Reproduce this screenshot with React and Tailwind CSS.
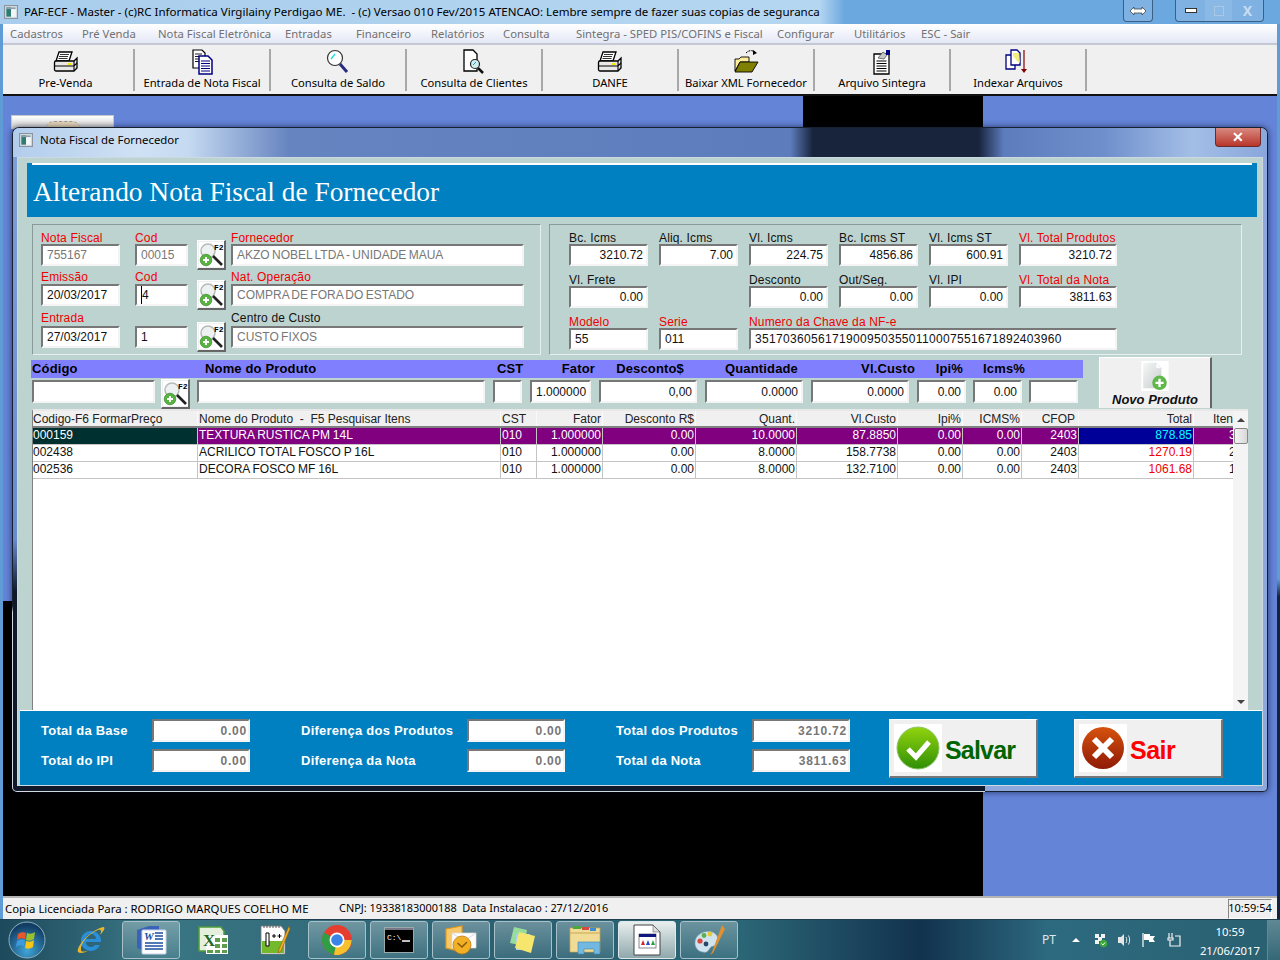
import React from "react";

const UI = "font-['Noto_Sans',sans-serif]";
const ARIAL = "font-['Liberation_Sans',sans-serif]";

// ICONS
const Printer = () => (
  <svg width="26" height="24" viewBox="0 0 26 24">
    <path d="M6 2h13l-3 9H3z" fill="#fff" stroke="#000" strokeWidth="1.300" />
    <path d="M7 4.500h9M6 6.500h9M5.500 8.500h9" stroke="#000" strokeWidth="0.800" />
    <path d="M3 11h18l3-3v10l-3 3H3a1.500 1.500 0 0 1-1.500-1.500v-7A1.500 1.500 0 0 1 3 11z" fill="#e8e8e8" stroke="#000" strokeWidth="1.300" />
    <path d="M2 16h19v5M21 11v5l3-3" fill="none" stroke="#000" strokeWidth="1.100" />
    <rect x="15" y="13" width="3.500" height="2" fill="#f5e500" />
  </svg>
);
const Docs = () => (
  <svg width="24" height="26" viewBox="0 0 24 26">
    <path d="M3 1h9l3 3v15H3z" fill="#fff" stroke="#000" strokeWidth="1.200" />
    <path d="M5 5h7M5 7.500h7M5 10h7M5 12.500h7" stroke="#000" strokeWidth="0.900" />
    <path d="M9 7h9l4 4v14H9z" fill="#fff" stroke="#000080" strokeWidth="1.500" />
    <path d="M11 12h9M11 14.500h9M11 17h9M11 19.500h9M11 22h9" stroke="#000080" strokeWidth="1" />
  </svg>
);
const Magnifier = () => (
  <svg width="24" height="26" viewBox="0 0 24 26">
    <circle cx="9" cy="9" r="7.500" fill="#fff" stroke="#333" strokeWidth="1.200" />
    <path d="M5 10l4-5" stroke="#18d8e0" strokeWidth="1.300" />
    <path d="M14 15l7 8" stroke="#2a2a80" strokeWidth="3" />
  </svg>
);
const DocSearch = () => (
  <svg width="24" height="26" viewBox="0 0 24 26">
    <path d="M2 1h9l4 4v17H2z" fill="#fff" stroke="#000" strokeWidth="1.300" />
    <circle cx="13" cy="15" r="4.500" fill="#cfeef0" stroke="#222" strokeWidth="1.200" />
    <path d="M11 16l3-3" stroke="#18a0c0" strokeWidth="1" />
    <path d="M16 19l5 5" stroke="#111" strokeWidth="2.500" />
  </svg>
);
const FolderOpen = () => (
  <svg width="26" height="26" viewBox="0 0 26 26">
    <path d="M2 10h4l2-2h8v5H7L2 22z" fill="#ffee99" stroke="#000" strokeWidth="0.900" />
    <path d="M2 23l5-10h18l-6 10z" fill="#808000" stroke="#000" strokeWidth="0.900" />
    <path d="M13 4c3-3 6-3 9-1" fill="none" stroke="#000" strokeWidth="1" strokeDasharray="2 1" />
    <path d="M20 1l4 3-4 2z" fill="#000" />
  </svg>
);
const Clipboard = () => (
  <svg width="24" height="26" viewBox="0 0 24 26">
    <path d="M4 5h15v20H4z" fill="#fff" stroke="#000" strokeWidth="1.300" />
    <path d="M6.500 12h10M6.500 14.500h10M6.500 17h10M6.500 19.500h10M6.500 22h10" stroke="#000" strokeWidth="1" />
    <path d="M8 9l5-6 4 3-3 4z" fill="#c8c8c8" stroke="#555" strokeWidth="0.800" />
    <rect x="16" y="1" width="4" height="5" fill="#000080" />
  </svg>
);
const IndexFiles = () => (
  <svg width="26" height="26" viewBox="0 0 26 26">
    <path d="M1 6h9v14H1z" fill="#fff" stroke="#000080" strokeWidth="1.300" />
    <path d="M6 1h6l3 3v12H6z" fill="#fff" stroke="#000080" strokeWidth="1.300" />
    <path d="M8 4h6l1 10-3-2-4-5z" fill="#f5ec80" />
    <path d="M19 1v20" stroke="#800000" strokeWidth="1.200" />
    <path d="M16 20h6l-3 4z" fill="#800000" />
  </svg>
);
const WinLogo = ({ size = 14 }) => (
  <svg width={size} height={size} viewBox="0 0 12 12">
    <rect x="0.500" y="0.500" width="11" height="11" fill="#dfe6ea" stroke="#8a949c" />
    <rect x="2" y="2" width="4" height="8" fill="#2e7d74" />
    <rect x="6" y="2" width="4" height="8" fill="#f2f6f5" />
    <rect x="2" y="2" width="8" height="1.500" fill="#8ea0ad" />
  </svg>
);
const SearchF2 = () => (
  <svg width="25" height="25" viewBox="0 0 25 25">
    <rect width="25" height="25" fill="#fff" />
    <circle cx="9" cy="9" r="7" fill="#eef1f1" stroke="#b5bbbb" strokeWidth="1.500" />
    <path d="M14 14l9 9" stroke="#222" strokeWidth="2.600" />
    <circle cx="7" cy="18" r="5.800" fill="#56b33f" stroke="#3b8a2a" strokeWidth="0.700" />
    <path d="M4 18h6M7 15v6" stroke="#fff" strokeWidth="2" />
    <text x="15" y="8" fontSize="8" fontWeight="700" fontFamily="Liberation Mono, monospace" fill="#000">F2</text>
  </svg>
);
const NewDoc = () => (
  <svg width="30" height="33" viewBox="0 0 30 33">
    <defs>
      <linearGradient id="nd" x1="0" y1="0" x2="1" y2="1">
        <stop offset="0" stopColor="#f6f8f8" />
        <stop offset="1" stopColor="#c8cccc" />
      </linearGradient>
    </defs>
    <rect width="30" height="33" fill="#fff" />
    <path d="M2 2h14l6 6v22H2z" fill="url(#nd)" />
    <path d="M16 2v6h6z" fill="#fff" stroke="#dde" strokeWidth="0.500" />
    <circle cx="20" cy="24" r="8" fill="#5fb84a" />
    <path d="M15.500 24h9M20 19.500v9" stroke="#fff" strokeWidth="2.600" />
  </svg>
);
const SaveIcon = () => (
  <svg width="48" height="48" viewBox="0 0 48 48">
    <defs>
      <linearGradient id="sv" x1="0" y1="0" x2="0" y2="1">
        <stop offset="0" stopColor="#92d40e" />
        <stop offset="1" stopColor="#2f8f06" />
      </linearGradient>
    </defs>
    <rect width="48" height="48" fill="#fff" />
    <circle cx="24" cy="24" r="21" fill="url(#sv)" stroke="#8ec46c" strokeWidth="1" />
    <path d="M14 25l8 8 13-15" fill="none" stroke="#fff" strokeWidth="5" />
  </svg>
);
const ExitIcon = () => (
  <svg width="48" height="48" viewBox="0 0 48 48">
    <defs>
      <linearGradient id="ex" x1="0" y1="0" x2="0" y2="1">
        <stop offset="0" stopColor="#d6520e" />
        <stop offset="1" stopColor="#8f1a06" />
      </linearGradient>
    </defs>
    <rect width="48" height="48" fill="#fff" />
    <circle cx="24" cy="24" r="21" fill="url(#ex)" />
    <path d="M15 15l18 18M33 15L15 33" stroke="#fff" strokeWidth="6" />
  </svg>
);

// TASKBAR ICONS
const Orb = () => (
  <svg width="38" height="38" viewBox="0 0 38 38">
    <defs>
      <radialGradient id="orb" cx="0.500" cy="0.800" r="0.700">
        <stop offset="0" stopColor="#3fa6d8" />
        <stop offset="1" stopColor="#123e66" />
      </radialGradient>
    </defs>
    <circle cx="19" cy="19" r="18" fill="url(#orb)" stroke="#8fb0bc" strokeWidth="1" />
    <path d="M10 13c3-2 5-2 8-1l-1 6c-3-1-5-1-8 1z" fill="#e8562c" />
    <path d="M19 12c3 1 5 1 8-1l-1 7c-3 2-5 2-8 1z" fill="#9ac02c" />
    <path d="M9 20c3-2 5-2 8-1l-1 6c-3-1-5-1-8 1z" fill="#3c9be0" />
    <path d="M18 20c3 1 5 1 8-1l-1 7c-3 2-5 2-8 1z" fill="#f5c518" />
  </svg>
);
const Ie = () => (
  <svg width="32" height="32" viewBox="0 0 32 32">
    <path d="M16 7a10 10 0 1 0 9 14h-5a5 5 0 0 1-9-3h15a10 10 0 0 0-10-11zm-5 8a5 5 0 0 1 10 0z" fill="#2a8fd8" />
    <path d="M3 28C1 24 12 8 28 3c4 0-1 6-3 8 2-4 1-6-2-5C13 10 5 20 6 26c0 2 4 2 8 0-4 3-9 4-11 2z" fill="#e8b52c" />
  </svg>
);
const Word = () => (
  <svg width="32" height="32" viewBox="0 0 32 32">
    <path d="M2 6l12-4h10v26H12L2 24z" fill="#3a62b8" />
    <rect x="7" y="6" width="24" height="24" rx="1" fill="#fff" stroke="#c8d4e8" />
    <text x="9" y="16" fontSize="11" fontWeight="700" fontStyle="italic" fontFamily="Liberation Serif, serif" fill="#1c4ea0">W</text>
    <path d="M20 9h8M20 12h8M20 15h8M10 19h18M10 22h18M10 25h18" stroke="#1c4ea0" strokeWidth="1.500" />
  </svg>
);
const Excel = () => (
  <svg width="32" height="32" viewBox="0 0 32 32">
    <path d="M2 3h22l3 4v20H2z" fill="#e4f0dc" stroke="#4f9a3c" strokeWidth="1.500" />
    <rect x="9" y="11" width="22" height="19" fill="#fff" />
    <path d="M18 14h5v4h-5zm7 0h5v4h-5zm-7 6h5v4h-5zm7 0h5v4h-5zm-7 6h5v3h-5zm7 0h5v3h-5zM10 26h6v3h-6z" fill="#5f9c4c" />
    <text x="6" y="22" fontSize="17" fontWeight="700" fontFamily="Liberation Serif, serif" fill="#1f6a1f">X</text>
  </svg>
);
const Npp = () => (
  <svg width="32" height="32" viewBox="0 0 32 32">
    <path d="M2 2h20l4 5v23H2z" fill="#fff" stroke="#777" strokeWidth="0.800" />
    <path d="M3 17h22v12H3z" fill="#74b92c" />
    <path d="M5 2v2M8 2v2M11 2v2M14 2v2M17 2v2M20 2v2" stroke="#555" />
    <path d="M7 9h3v13H7z" fill="#fff" stroke="#000" strokeWidth="1" />
    <path d="M13 12h4M15 10v4M18.500 12h4M20.500 10v4" stroke="#000" strokeWidth="1" />
    <path d="M30 2l-10 23-1 4 3-2L31 5z" fill="#f0b020" stroke="#8a5a10" strokeWidth="0.600" />
  </svg>
);
const Chrome = () => (
  <svg width="32" height="32" viewBox="0 0 32 32">
    <circle cx="16" cy="16" r="15" fill="#e53e30" />
    <path d="M16 16L3 8.500A15 15 0 0 0 13 30.700z" fill="#2f9e44" />
    <path d="M16 16h14.600A15 15 0 0 1 13 30.700z" fill="#f6c12d" />
    <circle cx="16" cy="16" r="7.500" fill="#fff" />
    <circle cx="16" cy="16" r="5.800" fill="#3a84e8" />
  </svg>
);
const Cmd = () => (
  <svg width="30" height="26" viewBox="0 0 30 26">
    <rect x="0.500" y="0.500" width="29" height="25" fill="#000" stroke="#9aa" />
    <rect x="1" y="1" width="28" height="2" fill="#778" />
    <text x="3" y="13" fontSize="8" fontFamily="Liberation Mono, monospace" fill="#fff">C:\</text>
    <path d="M18 14h8" stroke="#fff" strokeWidth="1.500" />
  </svg>
);
const Outlook = () => (
  <svg width="32" height="32" viewBox="0 0 32 32">
    <path d="M1 5l16-3v26L1 24z" fill="#f7c86a" stroke="#e09a20" strokeWidth="1.200" />
    <path d="M7 9h24v15H7z" fill="#fdfdfd" stroke="#ddd" strokeWidth="0.700" />
    <path d="M7 9l12 8 12-8" fill="none" stroke="#d8d8d8" />
    <circle cx="17" cy="21" r="9" fill="#f2b024" stroke="#c07c10" strokeWidth="0.800" />
    <path d="M12.500 19l4.500 4 5-5" fill="none" stroke="#8a5a08" strokeWidth="1.600" />
  </svg>
);
const Sticky = () => (
  <svg width="32" height="32" viewBox="0 0 32 32">
    <path d="M7 3l13 3-3 16-14-3z" fill="#98dc9c" />
    <path d="M9 10h14v16H9z" fill="#a8d0f0" />
    <path d="M12 8l16 4-4 17-16-5z" fill="#f6e66e" />
  </svg>
);
const Explorer = () => (
  <svg width="32" height="32" viewBox="0 0 32 32">
    <path d="M1 4h30v24H1z" fill="#f0dc96" stroke="#c8a850" strokeWidth="0.700" />
    <path d="M4 2h8v3H4z" fill="#4aa83c" />
    <path d="M13 3h7v3h-7z" fill="#d84a3c" />
    <path d="M21 4h6v3h-6z" fill="#3c8cd8" />
    <path d="M1 9h30" stroke="#c8a850" />
    <path d="M9 18h22v12h-6v-5H15v5H9z" fill="#72b8e0" stroke="#3c86b0" strokeWidth="0.600" />
  </svg>
);
const AppDoc = () => (
  <svg width="28" height="32" viewBox="0 0 28 32">
    <path d="M1 1h19l7 7v23H1z" fill="#fff" stroke="#444" strokeWidth="1" />
    <path d="M20 1v7h7z" fill="#ddd" stroke="#444" strokeWidth="0.500" />
    <rect x="6" y="10" width="17" height="14" fill="#fff" stroke="#556" strokeWidth="0.700" />
    <rect x="6" y="10" width="17" height="3" fill="#101880" />
    <path d="M8 21l2-5 2 5z" fill="#c82828" />
    <path d="M13 21l2-5 2 5z" fill="#2848c8" />
    <path d="M18 21l2-5 2 5z" fill="#28a048" />
  </svg>
);
const Palette = () => (
  <svg width="34" height="34" viewBox="0 0 34 34">
    <path d="M3 20c0-9 10-13 17-11 6 2 7 8 5 12-2 3-5 1-7 4-2 3-3 5-7 4-4 0-8-4-8-9z" fill="#cfe4ee" stroke="#8cb0c4" strokeWidth="0.600" />
    <circle cx="8" cy="18" r="2.600" fill="#d8483c" />
    <circle cx="12" cy="12.500" r="2.400" fill="#5cb04c" />
    <circle cx="18" cy="11" r="2.400" fill="#e8c830" />
    <circle cx="14" cy="21" r="2.400" fill="#284868" />
    <path d="M30 2l-10 27-2 3 3-2L33 6z" fill="#e09030" />
  </svg>
);

// SHARED BITS
const Sunken = ({ className = "", children, align = "left", pr = "pr-[3px]" }) => (
  <div
    className={`flex items-center overflow-hidden border-2 border-t-[#777] border-l-[#777] border-r-[#f4f4f4] border-b-[#f4f4f4] bg-white pl-1 text-[12px] whitespace-nowrap [word-spacing:-1px] ${pr} ${
      align === "right" ? "justify-end" : "justify-start"
    } ${ARIAL} ${className}`}
  >
    {children}
  </div>
);

const Field = ({ label, red, value, w, align, gray, yellow, spaced, lift = "" }) => (
  <div className={`flex flex-col ${w}`}>
    <div className={`h-[13px] text-[12px] leading-[15px] tracking-[0.15px] whitespace-nowrap ${ARIAL} ${lift} ${red ? "text-[#f00000]" : "text-[#111]"}`}>
      {label}
    </div>
    <Sunken
      align={align}
      className={`h-[22px] ${gray ? "text-[#777]" : "text-[#111]"} ${yellow ? "bg-[#ffffc8]" : ""} ${spaced ? "tracking-[0.32px]" : ""}`}
    >
      {value}
    </Sunken>
  </div>
);

const SearchBtn = ({ className = "" }) => (
  <div className={`flex h-[30px] w-[29px] shrink-0 items-center justify-center border border-b-2 border-r-2 border-t-white border-l-white border-b-[#666] border-r-[#666] bg-[#f0f0f0] ${className}`}>
    <SearchF2 />
  </div>
);

const SupplierRow = ({ label, red, cod, codLabel, codYellow, codGray, value, first, third, nameRed, nameLabel, gap, lift }) => (
  <div className={`flex h-[35px] ${gap}`}>
    <Field label={label} red={red} value={first} gray={third} w="w-[79px]" lift={lift} />
    <div className="ml-[15px]">
      <Field label={codLabel} red value={cod} gray={codGray} yellow={codYellow} w="w-[53px]" lift={lift} />
    </div>
    <SearchBtn className="mt-[9px] ml-[9px]" />
    <div className="ml-[5px]">
      <Field label={nameLabel} red={nameRed} value={value} gray w="w-[293px]" lift={lift} />
    </div>
  </div>
);

// TOOLBAR
const tools = [
  { name: "Pre-Venda", icon: <Printer />, w: "w-[132px] pr-[5px]" },
  { name: "Entrada de Nota Fiscal", icon: <Docs />, w: "w-[136px]" },
  { name: "Consulta de Saldo", icon: <Magnifier />, w: "w-[136px]" },
  { name: "Consulta de Clientes", icon: <DocSearch />, w: "w-[136px]" },
  { name: "DANFE", icon: <Printer />, w: "w-[136px]" },
  { name: "Baixar XML Fornecedor", icon: <FolderOpen />, w: "w-[136px]" },
  { name: "Arquivo Sintegra", icon: <Clipboard />, w: "w-[136px]" },
  { name: "Indexar Arquivos", icon: <IndexFiles />, w: "w-[136px]" },
];

const menus = [
  ["Cadastros", "w-[72px]"],
  ["Pré Venda", "w-[76px]"],
  ["Nota Fiscal Eletrônica", "w-[127px]"],
  ["Entradas", "w-[71px]"],
  ["Financeiro", "w-[75px]"],
  ["Relatórios", "w-[72px]"],
  ["Consulta", "w-[73px]"],
  ["Sintegra - SPED PIS/COFINS e Fiscal", "w-[201px]"],
  ["Configurar", "w-[77px]"],
  ["Utilitários", "w-[67px]"],
  ["ESC - Sair", "w-[60px]"],
];

// TABLE
const cols = "grid grid-cols-[165px_303px_36px_66px_93px_101px_101px_65px_59px_57px_115px_40px]";
const head = ["Codigo-F6 FormarPreço", "Nome do Produto  -  F5 Pesquisar Itens", "CST", "Fator", "Desconto R$", "Quant.", "Vl.Custo", "Ipi%", "ICMS%", "CFOP", "Total", "Itens"];
const rows = [
  ["000159", "TEXTURA RUSTICA PM 14L", "010", "1.000000", "0.00", "10.0000", "87.8850", "0.00", "0.00", "2403", "878.85", "3"],
  ["002438", "ACRILICO TOTAL FOSCO P 16L", "010", "1.000000", "0.00", "8.0000", "158.7738", "0.00", "0.00", "2403", "1270.19", "2"],
  ["002536", "DECORA FOSCO MF 16L", "010", "1.000000", "0.00", "8.0000", "132.7100", "0.00", "0.00", "2403", "1061.68", "1"],
];

const cellClass = (i) => {
  if (i === 0) return "text-left";
  if (i < 3) return "text-left pl-px [word-spacing:-0.5px]";
  if (i === 11) return "text-left pl-[35px]";
  return "text-right pr-[1px]";
};

const Row = ({ cells, selected }) => (
  <div className={`${cols} h-[17px] border-b border-[#c4c4c4] text-[12px] leading-[14px] ${ARIAL}`}>
    {cells.map((c, i) => {
      let tone = "bg-white text-[#111]";
      if (i === 10 && !selected) tone = "bg-white text-[#f00000]";
      if (selected) tone = "bg-[#800080] text-white";
      if (selected && i === 0) tone = "bg-[#003030] text-white";
      if (selected && i === 10) tone = "bg-[#000099] text-[#00ffff]";
      return (
        <div key={i} className={`overflow-hidden whitespace-nowrap border-r border-[#c4c4c4] ${cellClass(i)} ${tone}`}>
          {c}
        </div>
      );
    })}
  </div>
);

const Total = ({ label, value, lw, first }) => (
  <div className={`flex items-center ${first ? "" : "mt-[7px]"}`}>
    <div className={`text-[13px] font-bold tracking-[0.25px] whitespace-nowrap text-white ${ARIAL} ${lw}`}>{label}</div>
    <Sunken align="right" pr="pr-[1px]" className="h-[23px] w-[98px] text-[12.500px] font-bold tracking-[0.8px] text-[#777]">{value}</Sunken>
  </div>
);

const ActionBtn = ({ icon, label, color, className, track }) => (
  <div className={`flex h-[59px] w-[149px] items-center border border-b-2 border-r-2 border-t-white border-l-white border-b-[#777] border-r-[#777] bg-[#f0f0f0] pl-[4px] ${className}`}>
    {icon}
    <span className={`ml-[3px] translate-y-[3px] text-[25px] font-bold ${ARIAL} ${track} ${color}`}>{label}</span>
  </div>
);

const productInputs = [
  ["w-[123px]", ""],
  null,
  ["w-[288px]", ""],
  ["w-[29px] ml-[8px]", ""],
  ["w-[61px] ml-[8px]", "1.000000"],
  ["w-[98px] ml-[8px]", "0,00"],
  ["w-[98px] ml-[8px]", "0.0000"],
  ["w-[98px] ml-[8px]", "0.0000"],
  ["w-[49px] ml-[8px]", "0.00"],
  ["w-[49px] ml-[7px]", "0.00"],
  ["w-[49px] ml-[7px]", ""],
];

const productHead = [
  ["Código", "w-[173px] text-left"],
  ["Nome do Produto", "w-[292px] text-left"],
  ["CST", "w-[42px] text-left"],
  ["Fator", "w-[56px] text-right"],
  ["Desconto$", "w-[89px] text-right"],
  ["Quantidade", "w-[114px] text-right"],
  ["Vl.Custo", "w-[117px] text-right"],
  ["Ipi%", "w-[48px] text-right"],
  ["Icms%", "w-[62px] text-right"],
];

const taskButtons = [
  { icon: <Word />, box: true, w: "w-[58px] ml-[6px]" },
  { icon: <Excel />, w: "w-[58px] ml-[4px]" },
  { icon: <Npp />, w: "w-[58px] ml-[4px]" },
  { icon: <Chrome />, box: true, w: "w-[58px] ml-[4px]" },
  { icon: <Cmd />, box: true, w: "w-[58px] ml-[4px]" },
  { icon: <Outlook />, box: true, w: "w-[58px] ml-[4px]" },
  { icon: <Sticky />, box: true, w: "w-[58px] ml-[4px]" },
  { icon: <Explorer />, box: true, w: "w-[58px] ml-[4px]" },
  { icon: <AppDoc />, active: true, w: "w-[58px] ml-[4px]" },
  { icon: <Palette />, box: true, w: "w-[58px] ml-[4px]" },
];

export default function App() {
  return (
    <div className={`flex h-[960px] w-[1280px] flex-col overflow-hidden bg-[#5f9bd5] ${UI}`}>
      {/* TITLE BAR */}
      <div className="flex h-6 shrink-0 items-center bg-[linear-gradient(90deg,#a9cdec_0,#b4d6f1_60%,#b4d6f1_64%,#6ba8df_66%,#6ba8df_100%)] pl-[4px]">
        <WinLogo />
        <span className="ml-[6px] text-[11.550px] whitespace-pre text-black">
          PAF-ECF - Master - (c)RC Informatica Virgilainy Perdigao ME.  - (c) Versao 010 Fev/2015 ATENCAO: Lembre sempre de fazer suas copias de seguranca
        </span>
        <div className="mr-[16px] ml-auto flex items-start self-start">
          <div className="flex h-[22px] w-[30px] items-center justify-center rounded-b-[4px] border border-t-0 border-[#3d5f86] bg-[#7fb2e2]">
            <svg width="18" height="10" viewBox="0 0 18 10">
              <path d="M1 5l4-4v2h8V1l4 4-4 4V7H5v2z" fill="#fff" stroke="#333" strokeWidth="0.700" />
            </svg>
          </div>
          <div className="ml-[22px] flex h-[22px] w-[30px] items-center justify-center rounded-bl-[4px] border border-t-0 border-r-0 border-[#3d5f86] bg-[#7fb2e2]">
            <div className="h-[5px] w-[12px] border border-[#333] bg-white" />
          </div>
          <div className="flex h-[22px] w-[27px] items-center justify-center border-b border-[#3d5f86] bg-[#8ab9e6]">
            <div className="h-[10px] w-[10px] border border-[#a8c8e6]" />
          </div>
          <div className="flex h-[22px] w-[32px] items-center justify-center rounded-br-[4px] border border-t-0 border-l-0 border-[#3d5f86] bg-[#7fb2e2] text-[14px] font-bold text-[#c8dcf0]">X</div>
        </div>
      </div>

      <div className="flex min-h-0 flex-1 flex-col border-x-[3px] border-transparent bg-[linear-gradient(90deg,transparent_50%,#5f9bd5_50%),linear-gradient(180deg,#5f9bd5_0,#5f9bd5_62%,#14233f_64%,#14233f_100%)]">
        {/* MENU */}
        <div className="flex h-[21px] shrink-0 items-center border-b-2 border-[#c4c8d4] bg-[linear-gradient(180deg,#ffffff,#e4e8f6)] pt-[1px] pl-[7px] text-[11.300px] text-[#717171]">
          {menus.map(([m, w]) => (
            <span key={m} className={`whitespace-nowrap ${w}`}>{m}</span>
          ))}
        </div>

        {/* TOOLBAR */}
        <div className="flex h-[51px] shrink-0 items-center border-b-2 border-[#111] bg-[#f0f0f0]">
          {tools.map((t) => (
            <div key={t.name} className={`flex h-[42px] flex-col items-center border-r-2 border-[#a8a8a8] ${t.w}`}>
              <div className="flex h-[26px] items-center">{t.icon}</div>
              <span className="text-[11.200px] leading-[15px] whitespace-nowrap text-black">{t.name}</span>
            </div>
          ))}
        </div>

        {/* DESKTOP */}
        <div className="relative min-h-0 flex-1 bg-[#6484d8]">
          <div className="absolute top-0 left-[800px] h-[32px] w-[180px] bg-black" />
          <div className="absolute bottom-0 left-0 h-[295px] w-[980px] bg-black" />
          <div className="absolute top-[19px] left-[8px] flex h-[14px] w-[103px] justify-center border border-[#c8c8c8] bg-[linear-gradient(180deg,#ffffff,#cfcfcf)] pt-[5px]">
            <div className="h-[9px] w-[36px] rounded-t-full border-t border-dashed border-[#999] bg-[#e6d6b8]" />
          </div>

          {/* CHILD WINDOW */}
          <div className="absolute top-[31px] left-[9px] h-[665px] w-[1256px] rounded-t-[7px] rounded-b-[5px] bg-[linear-gradient(90deg,transparent_77.500%,#16202e_77.500%),linear-gradient(180deg,#16202e_0,#16202e_72%,#d0d8e0_73%,#d0d8e0_100%)] p-px shadow-[0_0_6px_rgba(0,0,30,0.6)]">
            <div className="flex h-full flex-col rounded-t-[6px] rounded-b-[4px] bg-[linear-gradient(90deg,transparent_77.500%,#8ca8dc_77.500%),linear-gradient(180deg,#7f9fd8_0,#6a8ad0_62%,#10182a_70%,#10182a_100%)] px-[4px] pb-[5px]">
              <div className="-mx-[4px] flex h-[29px] shrink-0 items-center rounded-t-[6px] bg-[linear-gradient(90deg,#b2cdec_0,#cfe1f4_10%,#c5d9f1_14%,#6684c0_22%,#5c7cbc_62%,#18233c_63.800%,#18233c_77%,#5c7cbc_79%,#6f8fcc_87%,#a3bee6_94%,#8aa7dc_100%)] pb-[5px] pl-[6px]">
                <WinLogo />
                <span className="ml-[7px] text-[11.400px] text-black">Nota Fiscal de Fornecedor</span>
                <div className="mr-[6px] ml-auto flex h-[19px] w-[46px] -translate-y-[3px] items-center justify-center rounded-b-[4px] border border-t-0 border-[#6a2a2a] bg-[linear-gradient(180deg,#d88a80,#b8352a)] text-[14px] leading-none font-bold text-white">✕</div>
              </div>

              <div className="flex min-h-0 flex-1 flex-col border border-[#cdd9e2] bg-[#bdd3d0]">
                {/* HEADER */}
                <div className="mt-[5px] ml-[9px] h-[54px] w-[1230px] shrink-0 bg-[#0080c0]">
                  <div className="mx-[5px] h-[2px] bg-white" />
                  <div className="pt-[10px] pl-[6px] font-['Liberation_Serif',serif] text-[27.400px] leading-[34px] text-white">
                    Alterando Nota Fiscal de Fornecedor
                  </div>
                </div>

                {/* PANELS */}
                <div className="mt-[7px] ml-[14px] flex shrink-0 gap-[8px]">
                  <div className="flex h-[131px] w-[509px] flex-col border border-t-[#8a9a98] border-l-[#8a9a98] border-r-[#e8f0ee] border-b-[#e8f0ee] pt-[6px] pl-[8px]">
                    <SupplierRow label="Nota Fiscal" red first="755167" third codLabel="Cod" cod="00015" codGray nameLabel="Fornecedor" nameRed value="AKZO NOBEL LTDA - UNIDADE MAUA" />
                    <SupplierRow label="Emissão" red first="20/03/2017" codLabel="Cod" cod={<span className="border-l border-black">4</span>} codYellow nameLabel="Nat. Operação" nameRed value="COMPRA DE FORA DO ESTADO" gap="mt-[5px]" lift="-mt-px mb-px" />
                    <SupplierRow label="Entrada" red first="27/03/2017" codLabel=" " cod="1" nameLabel="Centro de Custo" value="CUSTO FIXOS" gap="mt-[7px]" lift="-mt-[2px] mb-[2px]" />
                  </div>

                  <div className="flex h-[131px] w-[693px] flex-col gap-[7px] border border-t-[#8a9a98] border-l-[#8a9a98] border-r-[#e8f0ee] border-b-[#e8f0ee] pt-[6px] pl-[19px]">
                    <div className="flex gap-[11px]">
                      <Field label="Bc. Icms" value="3210.72" align="right" w="w-[79px]" />
                      <Field label="Aliq. Icms" value="7.00" align="right" w="w-[79px]" />
                      <Field label="Vl. Icms" value="224.75" align="right" w="w-[79px]" />
                      <Field label="Bc. Icms ST" value="4856.86" align="right" w="w-[79px]" />
                      <Field label="Vl. Icms ST" value="600.91" align="right" w="w-[79px]" />
                      <Field label="Vl. Total Produtos" red value="3210.72" align="right" w="w-[98px]" />
                    </div>
                    <div className="flex gap-[11px]">
                      <Field label="Vl. Frete" value="0.00" align="right" w="w-[79px]" />
                      <div className="w-[79px]" />
                      <Field label="Desconto" value="0.00" align="right" w="w-[79px]" />
                      <Field label="Out/Seg." value="0.00" align="right" w="w-[79px]" />
                      <Field label="Vl. IPI" value="0.00" align="right" w="w-[79px]" />
                      <Field label="Vl. Total da Nota" red value="3811.63" align="right" w="w-[98px]" />
                    </div>
                    <div className="flex gap-[11px]">
                      <Field label="Modelo" red value="55" w="w-[79px]" />
                      <Field label="Serie" red value="011" w="w-[79px]" />
                      <Field label="Numero da Chave da NF-e" red spaced value="35170360561719009503550110007551671892403960" w="w-[368px]" />
                    </div>
                  </div>
                </div>

                {/* PRODUCT ENTRY */}
                <div className="mt-[2px] ml-[13px] flex h-[51px] shrink-0">
                  <div className="w-[1052px] pt-[3px]">
                    <div className={`flex h-[18px] items-center bg-[#8080ff] pl-px text-[13px] font-bold tracking-[0.15px] text-black ${ARIAL}`}>
                      {productHead.map(([h, cls]) => (
                        <span key={h} className={`whitespace-nowrap ${cls}`}>{h}</span>
                      ))}
                    </div>
                    <div className="mt-[1px] ml-px flex items-start">
                      {productInputs.map((p, i) =>
                        p ? (
                          <Sunken key={i} align={i > 4 ? "right" : "left"} className={`mt-[1px] h-[23px] text-[#111] ${p[0]}`}>{p[1]}</Sunken>
                        ) : (
                          <div key={i} className="mr-[7px] ml-[6px]"><SearchBtn /></div>
                        )
                      )}
                    </div>
                  </div>
                  <div className="ml-[16px] flex h-[51px] w-[113px] flex-col items-center border-t border-l border-r-2 border-t-white border-l-white border-r-[#666] bg-[#f0f0f0] pt-[3px]">
                    <NewDoc />
                    <span className={`mt-[1px] text-[13px] leading-[16px] font-bold italic text-[#111] ${ARIAL}`}>Novo Produto</span>
                  </div>
                </div>

                {/* TABLE */}
                <div className="mt-[1px] ml-[14px] flex h-[301px] w-[1216px] shrink-0 border-t-2 border-l border-t-[#e8e8e8] border-l-[#808080] bg-white">
                  <div className="min-w-0 flex-1">
                    <div className={`${cols} h-[17px] border-b-2 border-[#808080] bg-[#f0f0f0] text-[12px] leading-[17px] text-[#222] ${ARIAL}`}>
                      {head.map((h, i) => (
                        <div key={h} className={`overflow-hidden border-r border-[#fafafa] whitespace-pre ${i === 0 ? "text-left" : i < 3 ? "pl-px text-left" : i === 11 ? "pl-[19px] text-left" : i === 9 ? "pr-[3px] text-right" : "pr-[1px] text-right"}`}>
                          {h}
                        </div>
                      ))}
                    </div>
                    {rows.map((r, i) => (
                      <Row key={r[0]} cells={r} selected={i === 0} />
                    ))}
                  </div>
                  <div className="flex w-[15px] shrink-0 flex-col items-center justify-between bg-[#f4f4f4] text-[#444]">
                    <div className="flex w-full flex-col items-center">
                      <div className="flex h-[17px] items-center"><div className="h-0 w-0 border-x-[4px] border-b-[4px] border-x-transparent border-b-[#444]" /></div>
                      <div className="h-[16px] w-[14px] rounded-[2px] border border-[#888] bg-[linear-gradient(90deg,#f4f4f4,#d8d8d8)]" />
                    </div>
                    <div className="flex h-[17px] items-center"><div className="h-0 w-0 border-x-[4px] border-t-[4px] border-x-transparent border-t-[#444]" /></div>
                  </div>
                </div>

                {/* TOTALS */}
                <div className="ml-[2px] flex min-h-0 flex-1 items-start border-t border-white bg-[#0080c0] pt-[8px] pl-[21px]">
                  <div>
                    <Total first label="Total da Base" value="0.00" lw="w-[111px]" />
                    <Total label="Total do IPI" value="0.00" lw="w-[111px]" />
                  </div>
                  <div className="ml-[51px]">
                    <Total first label="Diferença dos Produtos" value="0.00" lw="w-[166px]" />
                    <Total label="Diferença da Nota" value="0.00" lw="w-[166px]" />
                  </div>
                  <div className="ml-[51px]">
                    <Total first label="Total dos Produtos" value="3210.72" lw="w-[136px]" />
                    <Total label="Total da Nota" value="3811.63" lw="w-[136px]" />
                  </div>
                  <ActionBtn className="ml-[39px]" icon={<SaveIcon />} label="Salvar" track="tracking-[-0.8px]" color="text-[#006400]" />
                  <ActionBtn className="ml-[36px]" icon={<ExitIcon />} label="Sair" track="tracking-[-0.5px]" color="text-[#ff0000]" />
                </div>
              </div>
            </div>
          </div>
        </div>

        {/* STATUS BAR */}
        <div className="flex h-[23px] shrink-0 items-center border-t-2 border-[#b4b4b4] bg-[#f0f0f0] pl-[2px] text-[11.400px] whitespace-pre text-black">
          <span className="w-[334px]">Copia Licenciada Para : RODRIGO MARQUES COELHO ME</span>
          <span className="text-[10.900px]">CNPJ: 19338183000188  Data Instalacao : 27/12/2016</span>
          <div className="mr-[5px] ml-auto flex h-[20px] w-[44px] items-center justify-center border border-t-[#888] border-l-[#888] border-r-white border-b-white text-[11px]">10:59:54</div>
        </div>
      </div>

      {/* TASKBAR */}
      <div className="flex h-[41px] shrink-0 items-center border-t border-[#1f3f50] bg-[linear-gradient(90deg,#1d4a5c_0,#3a7684_12%,#2a5f70_40%,#2b6676_58%,#12324e_72%,#2d6a80_82%,#2a6070_100%)] pl-[5px] text-white">
        <div className="flex w-[44px] justify-center"><Orb /></div>
        <div className="ml-[16px] flex w-[51px] justify-center"><Ie /></div>
        {taskButtons.map((b, i) => (
          <div
            key={i}
            className={`flex h-[38px] items-center justify-center rounded-[3px] ${b.w} ${
              b.active
                ? "border border-[#dfe8ea] bg-[linear-gradient(180deg,#e8eeee,#90a8ac)]"
                : b.box
                ? "border border-[#a8c0c8] bg-[linear-gradient(180deg,rgba(255,255,255,0.3),rgba(255,255,255,0.08))]"
                : ""
            }`}
          >
            {b.icon}
          </div>
        ))}
        <span className="ml-[304px] text-[12px] text-[#dde8ee]">PT</span>
        <div className="ml-[16px] h-0 w-0 border-x-[4px] border-b-[4px] border-x-transparent border-b-white" />
        <svg className="ml-[12px]" width="16" height="16" viewBox="0 0 16 16">
          <path d="M3 2h4v4H3zm6 0h4v4H9zM3 8h4v4H3zm3-3h4v4H6z" fill="#f2f2f2" />
          <circle cx="11.500" cy="11.500" r="3.800" fill="#3aa83a" />
          <path d="M9.500 11.500l1.500 1.500 2-2.500" stroke="#fff" fill="none" />
        </svg>
        <svg className="ml-[9px]" width="15" height="16" viewBox="0 0 15 16">
          <path d="M1 5h3l3-3v12l-3-3H1z" fill="#e6e6e6" />
          <path d="M9 5c1 2 1 4 0 6M11.500 3.500c1.500 3 1.500 6 0 9" stroke="#e6e6e6" fill="none" />
        </svg>
        <svg className="ml-[9px]" width="15" height="16" viewBox="0 0 15 16">
          <path d="M2 1v14" stroke="#fff" strokeWidth="1.200" />
          <path d="M3 2h6v2h5l-2 3 2 3H8V8H3z" fill="#fff" />
        </svg>
        <svg className="ml-[10px]" width="15" height="16" viewBox="0 0 15 16">
          <path d="M3 1v5h3V1M2 6h5v2H2zM4 8v6h10V4H9" fill="none" stroke="#f2f2f2" strokeWidth="1.200" />
        </svg>
        <div className="ml-[14px] flex w-[70px] flex-col items-center pt-px text-[11.300px] leading-[19px]">
          <span>10:59</span>
          <span>21/06/2017</span>
        </div>
        <div className="ml-auto h-full w-[13px] border-l border-[#5a8a9c] bg-[linear-gradient(180deg,rgba(255,255,255,0.25),rgba(255,255,255,0.05))]" />
      </div>
    </div>
  );
}
